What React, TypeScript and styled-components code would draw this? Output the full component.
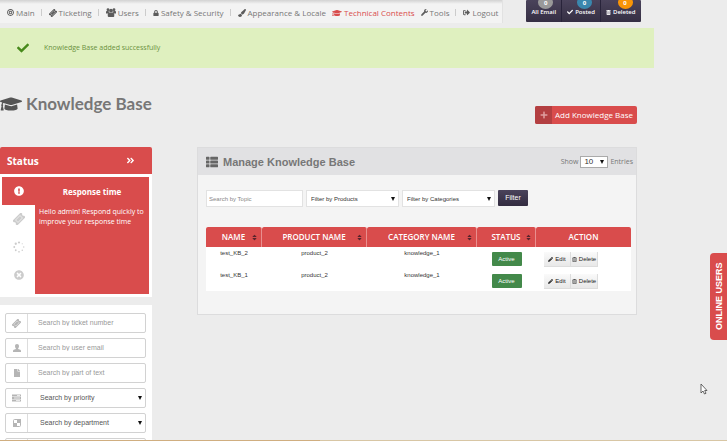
import React from "react";
import styled, { createGlobalStyle, css } from "styled-components";
import {
  FaAngleDoubleRight, FaBullseye, FaCheck, FaExclamationCircle, FaFile, FaGraduationCap, FaLock,
  FaPaintBrush, FaPencilAlt, FaPlus, FaRegTrashAlt, FaSignOutAlt, FaSort, FaThList,
  FaTimesCircle, FaTrashAlt, FaWrench,
} from "react-icons/fa";

const red = "#d94c4c";
const openSans = '"Open Sans", "Noto Sans", sans-serif';
const arial = '"Liberation Sans", Arial, sans-serif';

const GlobalStyle = createGlobalStyle`
  * { box-sizing: border-box; }
  html { height: 100%; overflow: hidden; }
  body { margin: 0; background: #ececec; color: #777; font: 8px/12px ${openSans}; }
  button, input, select { font: inherit; margin: 0; }
  h1, h2, h3, p, ul { margin: 0; padding: 0; }
  svg { flex: none; }
`;

const Page = styled.div`
  height: 100vh;
  overflow: hidden;
`;

const TopBar = styled.header`
  display: flex;
  align-items: flex-start;
  height: 28px;
`;

const Nav = styled.nav`
  display: flex;
  align-items: center;
  height: 23px;
  padding: 2px 4px 0 7px;
  background: linear-gradient(#d2d2d2, #f3f3f3 4px);
  border-right: 1px solid #e2e2e2;
`;

const NavLink = styled.a<{ $active?: boolean }>`
  display: flex;
  align-items: center;
  gap: 2px;
  color: ${(p) => (p.$active ? red : "#777")};
  text-decoration: none;
  white-space: nowrap;
  svg {
    color: ${(p) => (p.$active ? red : "#5c5c5c")};
  }
  & + & {
    margin-left: 6px;
  }
  & + &::before {
    content: "";
    height: 7px;
    margin-right: 5px;
    border-left: 1px solid #ccc;
  }
`;

const MailGroup = styled.div`
  display: flex;
  height: 22px;
  margin-left: 23px;
  border-radius: 1px;
  background: linear-gradient(#4a435b, #352f43);
`;

const MailButton = styled.button`
  position: relative;
  display: flex;
  align-items: center;
  gap: 2px;
  padding: 2px 5px 0;
  border: 0;
  border-right: 1px solid #28233a;
  background: none;
  color: #fff;
  font-size: 6px;
  font-weight: 600;
  &:last-child {
    border-right: 0;
  }
`;

const Bubble = styled.span<{ $color: string }>`
  position: absolute;
  top: -4px;
  right: 8px;
  width: 15px;
  height: 13px;
  border-radius: 50%;
  background: ${(p) => p.$color};
  font-size: 6px;
  font-weight: 700;
  line-height: 15px;
  text-align: center;
`;

const Alert = styled.div`
  display: flex;
  align-items: center;
  gap: 15px;
  width: 90%;
  height: 40px;
  padding: 0 17px;
  background: #dff0bf;
  color: #6b9040;
  font-size: 7px;
  svg {
    color: #478a1b;
  }
`;

const Body = styled.div`
  padding-right: 90px;
`;

const Heading = styled.div`
  display: flex;
  justify-content: space-between;
  height: 79px;
  padding-top: 25px;
`;

const Title = styled.h1`
  display: flex;
  align-items: center;
  gap: 4px;
  height: 22px;
  color: #777;
  font-family: Lato, ${openSans};
  font-size: 17px;
  svg {
    color: #555;
  }
`;

const AddButton = styled.button`
  display: flex;
  align-items: center;
  height: 18px;
  margin-top: 13px;
  padding: 0;
  overflow: hidden;
  border: 0;
  border-radius: 2px;
  background: ${red};
  color: #fff;
  white-space: nowrap;
`;

const AddIcon = styled.span`
  display: grid;
  place-items: center;
  width: 17px;
  height: 18px;
  margin-right: 3px;
  background: #b33f41;
  color: #e0a0a0;
`;

const AddLabel = styled.span`
  padding-right: 4px;
`;

const Columns = styled.div`
  display: grid;
  grid-template-columns: 152px minmax(0, 1fr);
  align-items: start;
  gap: 45px;
`;

const SideHeader = styled.h2`
  display: flex;
  align-items: center;
  justify-content: space-between;
  height: 27px;
  padding: 0 17px 0 7px;
  border-radius: 2px 2px 0 0;
  background: ${red};
  color: #fff;
  font-size: 10px;
`;

const StatusPanel = styled.div`
  display: grid;
  grid-template-columns: 33px 1fr;
  padding: 3px;
  padding-left: 2px;
  background: #fff;
`;

const StatusTabs = styled.div`
  display: flex;
  flex-direction: column;
`;

const StatusTab = styled.button<{ $active?: boolean }>`
  display: grid;
  place-items: center;
  height: 28px;
  padding: 0;
  border: 0;
  background: ${(p) => (p.$active ? red : "#fff")};
  color: ${(p) => (p.$active ? "#fff" : "#ccc")};
`;

const StatusText = styled.div`
  height: 117px;
  background: ${red};
  color: #fff;
  p {
    padding: 0 4px;
    font-size: 7px;
    line-height: 10px;
  }
`;

const StatusTitle = styled.h3`
  height: 30px;
  font-size: 8px;
  line-height: 30px;
  text-align: center;
`;

const SearchPanel = styled.form`
  display: flex;
  flex-direction: column;
  gap: 5px;
  margin-top: 8px;
  padding: 8px 6px 8px 5px;
  background: #fff;
`;

const Field = styled.label`
  position: relative;
  display: flex;
  height: 20px;
  border: 1px solid #d2d2d2;
  border-radius: 2px;
  background: #fff;
  font-family: ${arial};
  font-size: 7px;
`;

const FieldIcon = styled.span`
  display: grid;
  place-items: center;
  width: 22px;
  border-right: 1px solid #ddd;
  color: #b5b5b5;
`;

const controlReset = css`
  flex: 1;
  min-width: 0;
  width: 100%;
  border: 0;
  border-radius: 0;
  outline: 0;
  background: transparent;
  appearance: none;
`;

const FieldInput = styled.input`
  ${controlReset}
  padding: 0 10px;
  &::placeholder {
    color: #999;
  }
`;

const FieldSelect = styled.select`
  ${controlReset}
  padding: 0 12px;
  color: #555;
`;

const Arrow = styled.svg`
  position: absolute;
  right: 3px;
  top: calc(50% - 2px);
  width: 4px;
  height: 4px;
  fill: #111;
  pointer-events: none;
`;

const DownArrow = () => (
  <Arrow viewBox="0 0 4 4" aria-hidden="true">
    <path d="M0 0H4L2 4Z" />
  </Arrow>
);

const Panel = styled.main`
  border: 1px solid #dcdcdd;
  background: #f4f4f4;
`;

const PanelHeader = styled.div`
  display: flex;
  align-items: center;
  justify-content: space-between;
  height: 27px;
  padding: 0 3px 0 8px;
  background: #e1e1e3;
`;

const PanelTitle = styled.h2`
  display: flex;
  align-items: center;
  gap: 5px;
  font-family: ${arial};
  font-size: 11px;
  svg {
    color: #666;
  }
`;

const Entries = styled.label`
  display: flex;
  align-items: center;
  gap: 2px;
  font-size: 7px;
`;

const SelectBox = styled.span<{ $width: number; $height: number }>`
  position: relative;
  display: flex;
  width: ${(p) => p.$width}px;
  height: ${(p) => p.$height}px;
  border: 1px solid #e2e2e2;
  background: #fff;
  color: #333;
  font-family: ${arial};
  select {
    ${controlReset}
    padding: 0 4px;
    color: inherit;
    line-height: normal;
  }
`;

const CountBox = styled(SelectBox)`
  border-color: #aaa;
  font-size: 8px;
  select {
    padding: 0 3px;
  }
`;

const PanelBody = styled.div`
  padding: 15px 5px 23px 8px;
`;

const Filters = styled.form`
  display: flex;
  gap: 3px;
  margin-bottom: 20px;
  font-size: 6px;
`;

const TopicInput = styled.input`
  width: 97px;
  height: 17px;
  padding: 0 2px;
  border: 1px solid #e2e2e2;
  outline: 0;
  background: #fff;
  font-family: ${arial};
  &::placeholder {
    color: #888;
  }
`;

const FilterButton = styled.button`
  width: 30px;
  height: 16px;
  padding: 0;
  border: 0;
  border-radius: 1px;
  background: linear-gradient(#4a435b, #322c40);
  color: #fff;
  font-family: ${arial};
  font-size: 7px;
`;

const Table = styled.table`
  width: 100%;
  table-layout: fixed;
  border-collapse: separate;
  border-spacing: 0;
  background: #fff;
  color: #333;
  font-family: ${arial};
  font-size: 6px;
`;

const HeadCell = styled.th<{ $width?: string }>`
  position: relative;
  width: ${(p) => p.$width ?? "auto"};
  height: 20px;
  padding: 0;
  border-right: 1px solid #e98f8f;
  border-radius: 2px 2px 0 0;
  background: ${red};
  color: #fff;
  font-family: ${openSans};
  font-size: 8px;
  font-weight: 600;
  white-space: nowrap;
  &:last-child {
    border-right: 0;
  }
  svg {
    position: absolute;
    top: 7px;
    right: 3px;
    color: #59242c;
  }
`;

const Cell = styled.td<{ $align?: string }>`
  height: 22px;
  padding: 0;
  text-align: ${(p) => p.$align ?? "center"};
  vertical-align: top;
`;

const Badge = styled.span`
  display: inline-block;
  width: 30px;
  height: 14px;
  margin-top: 5px;
  border-radius: 1px;
  background: #43894a;
  color: #fff;
  line-height: 14px;
`;

const Actions = styled.div`
  display: flex;
  margin: 5px 0 0 8px;
`;

const ActionButton = styled.button`
  display: flex;
  align-items: center;
  justify-content: center;
  gap: 2px;
  width: 27px;
  height: 15px;
  padding: 0;
  border: 1px solid #ddd;
  border-width: 0 1px 1px 0;
  background: linear-gradient(#fafafa, #e8e8e8);
  color: #222;
  font-size: 6px;
`;

const OnlineUsers = styled.button`
  position: fixed;
  top: 253px;
  right: 0;
  width: 17px;
  height: 87px;
  padding: 0;
  border: 0;
  border-radius: 0 4px 4px 0;
  background: ${red};
  color: #fff;
  font-family: ${arial};
  font-size: 9px;
  font-weight: 700;
  writing-mode: vertical-rl;
  transform: rotate(180deg);
`;

const Pointer = styled.svg`
  position: fixed;
  left: 700px;
  top: 383px;
  width: 8px;
  height: 12px;
`;

const BottomLine = styled.div`
  position: fixed;
  right: 0;
  bottom: 0;
  left: 0;
  height: 1px;
  background: linear-gradient(90deg, #d0ae80 0 44%, #d8c6a4 44%);
`;

const Ticket = ({ size, line = "#eee" }: { size: number; line?: string }) => (
  <svg width={size} height={size} viewBox="0 0 16 16" aria-hidden="true">
    <g transform="rotate(-45 8 8)">
      <path
        fill="currentColor"
        d="M0 3.500H16V6.300A1.800 1.800 0 0 0 16 9.700V12.500H0V9.700A1.800 1.800 0 0 0 0 6.300Z"
      />
      <path d="M3.800 5.700H12.200V10.300H3.800Z" fill="none" stroke={line} strokeWidth=".8" />
    </g>
  </svg>
);

const Users = () => (
  <svg width="10" height="9" viewBox="0 0 20 18" fill="currentColor" aria-hidden="true">
    <circle cx="4" cy="3.500" r="2.800" />
    <circle cx="16" cy="3.500" r="2.800" />
    <circle cx="10" cy="5.500" r="3.800" />
    <path d="M0 11V8C0 6.500 1 6 2 6H5.500V8.500L7 9.500 4 11ZM20 11V8C20 6.500 19 6 18 6H14.500V8.500L13 9.500 16 11Z" />
    <path d="M3.500 16V13C3.500 10.500 5 9 7 9Q10 11 13 9C15 9 16.500 10.500 16.500 13V16C16.500 17.300 15.700 18 14.500 18H5.500C4.300 18 3.500 17.300 3.500 16Z" />
  </svg>
);

const Person = () => (
  <svg width="8" height="8" viewBox="0 0 16 16" fill="currentColor" aria-hidden="true">
    <path d="M8 0C10.500 0 12 1.700 12 4.300 12 6.300 11.300 8 10.200 9V10L14.500 11.500Q16 12 16 14V16H0V14Q0 12 1.500 11.500L5.800 10V9C4.700 8 4 6.300 4 4.300 4 1.700 5.500 0 8 0Z" />
  </svg>
);

const Spinner = () => (
  <svg width="12" height="12" viewBox="0 0 24 24" fill="currentColor" aria-hidden="true">
    <circle cx="12" cy="3" r="2.200" />
    <circle cx="18.500" cy="5.500" r="1.200" />
    <circle cx="21.500" cy="12" r="1.400" />
    <circle cx="18.500" cy="18.500" r="1.500" />
    <circle cx="12" cy="21.500" r="1.700" />
    <circle cx="5.500" cy="18.500" r="1.800" />
    <circle cx="2.500" cy="12" r="1.900" />
    <circle cx="5.500" cy="5.500" r="2.300" />
  </svg>
);

const Priority = () => (
  <svg width="9" height="8" viewBox="0 0 9 8" fill="none" stroke="currentColor" aria-hidden="true">
    <path d="M0 1.500H9M0 4H9M0 6.500H9" strokeWidth="1.800" />
    <path d="M5 1.500H8M2 4H8M4 6.500H8" stroke="#fff" strokeWidth=".7" />
  </svg>
);

const Department = () => (
  <svg width="8" height="8" viewBox="0 0 8 8" fill="none" aria-hidden="true">
    <rect x=".5" y=".5" width="7" height="7" rx="1" stroke="currentColor" />
    <path d="M4 0H8V4H4ZM0 4H4V8H0Z" fill="currentColor" />
  </svg>
);

const navItems = [
  { label: "Main", icon: <FaBullseye size={7} /> },
  { label: "Ticketing", icon: <Ticket size={8} /> },
  { label: "Users", icon: <Users /> },
  { label: "Safety & Security", icon: <FaLock size={6} /> },
  { label: "Appearance & Locale", icon: <FaPaintBrush size={8} /> },
  { label: "Technical Contents", icon: <FaGraduationCap size={10} />, active: true },
  { label: "Tools", icon: <FaWrench size={7} /> },
  { label: "Logout", icon: <FaSignOutAlt size={7} /> },
];

const columns = [
  { label: "NAME", width: "56px" },
  { label: "PRODUCT NAME", width: "105px" },
  { label: "CATEGORY NAME", width: "110px" },
  { label: "STATUS", width: "59px" },
];

const rows = ["test_KB_2", "test_KB_1"];

export default function App() {
  return (
    <Page>
      <GlobalStyle />
      <TopBar>
        <Nav>
          {navItems.map((item) => (
            <NavLink href="#" key={item.label} $active={item.active}>
              {item.icon}
              {item.label}
            </NavLink>
          ))}
        </Nav>
        <MailGroup>
          <MailButton>All Email<Bubble $color="#999">0</Bubble></MailButton>
          <MailButton><FaCheck size={6} />Posted<Bubble $color="#3a87ad">0</Bubble></MailButton>
          <MailButton><FaTrashAlt size={5} />Deleted<Bubble $color="#f89406">0</Bubble></MailButton>
        </MailGroup>
      </TopBar>
      <Alert role="status">
        <FaCheck size={12} />
        Knowledge Base added successfully
      </Alert>
      <Body>
        <Heading>
          <Title><FaGraduationCap size={22} />Knowledge Base</Title>
          <AddButton>
            <AddIcon><FaPlus size={8} /></AddIcon>
            <AddLabel>Add Knowledge Base</AddLabel>
          </AddButton>
        </Heading>
        <Columns>
          <aside>
            <SideHeader>Status<FaAngleDoubleRight size={9} /></SideHeader>
            <StatusPanel>
              <StatusTabs>
                <StatusTab $active aria-label="Response time"><FaExclamationCircle size={10} /></StatusTab>
                <StatusTab aria-label="Tickets"><Ticket size={12} line="#fff" /></StatusTab>
                <StatusTab aria-label="Pending"><Spinner /></StatusTab>
                <StatusTab aria-label="Closed"><FaTimesCircle size={10} /></StatusTab>
              </StatusTabs>
              <StatusText>
                <StatusTitle>Response time</StatusTitle>
                <p>Hello admin! Respond quickly to improve your response time</p>
              </StatusText>
            </StatusPanel>
            <SearchPanel>
              <Field>
                <FieldIcon><Ticket size={9} line="#fff" /></FieldIcon>
                <FieldInput aria-label="Ticket number" placeholder="Search by ticket number" />
              </Field>
              <Field>
                <FieldIcon><Person /></FieldIcon>
                <FieldInput aria-label="User email" placeholder="Search by user email" />
              </Field>
              <Field>
                <FieldIcon><FaFile size={8} /></FieldIcon>
                <FieldInput aria-label="Part of text" placeholder="Search by part of text" />
              </Field>
              <Field>
                <FieldIcon><Priority /></FieldIcon>
                <FieldSelect aria-label="Priority"><option>Search by priority</option></FieldSelect>
                <DownArrow />
              </Field>
              <Field>
                <FieldIcon><Department /></FieldIcon>
                <FieldSelect aria-label="Department"><option>Search by department</option></FieldSelect>
                <DownArrow />
              </Field>
              <Field>
                <FieldIcon />
                <FieldInput aria-label="Search" />
              </Field>
            </SearchPanel>
          </aside>
          <Panel>
            <PanelHeader>
              <PanelTitle><FaThList size={12} />Manage Knowledge Base</PanelTitle>
              <Entries>
                Show
                <CountBox $width={28} $height={12}>
                  <select><option>10</option></select>
                  <DownArrow />
                </CountBox>
                Entries
              </Entries>
            </PanelHeader>
            <PanelBody>
              <Filters>
                <TopicInput aria-label="Topic" placeholder="Search by Topic" />
                <SelectBox $width={93} $height={17}>
                  <select aria-label="Products"><option>Filter by Products</option></select>
                  <DownArrow />
                </SelectBox>
                <SelectBox $width={93} $height={17}>
                  <select aria-label="Categories"><option>Filter by Categories</option></select>
                  <DownArrow />
                </SelectBox>
                <FilterButton type="button">Filter</FilterButton>
              </Filters>
              <Table>
                <thead>
                  <tr>
                    {columns.map((c) => (
                      <HeadCell key={c.label} $width={c.width}>{c.label}<FaSort size={7} /></HeadCell>
                    ))}
                    <HeadCell>ACTION</HeadCell>
                  </tr>
                </thead>
                <tbody>
                  {rows.map((name) => (
                    <tr key={name}>
                      <Cell>{name}</Cell>
                      <Cell>product_2</Cell>
                      <Cell>knowledge_1</Cell>
                      <Cell><Badge>Active</Badge></Cell>
                      <Cell $align="left">
                        <Actions>
                          <ActionButton><FaPencilAlt size={5} />Edit</ActionButton>
                          <ActionButton><FaRegTrashAlt size={5} />Delete</ActionButton>
                        </Actions>
                      </Cell>
                    </tr>
                  ))}
                </tbody>
              </Table>
            </PanelBody>
          </Panel>
        </Columns>
      </Body>
      <OnlineUsers>ONLINE USERS</OnlineUsers>
      <Pointer viewBox="0 0 8 12" aria-hidden="true">
        <path d="M1 1V10L3 8 4.500 11 6 10.300 4.700 7.500H7Z" fill="#fff" stroke="#444" strokeWidth=".8" />
      </Pointer>
      <BottomLine />
    </Page>
  );
}
